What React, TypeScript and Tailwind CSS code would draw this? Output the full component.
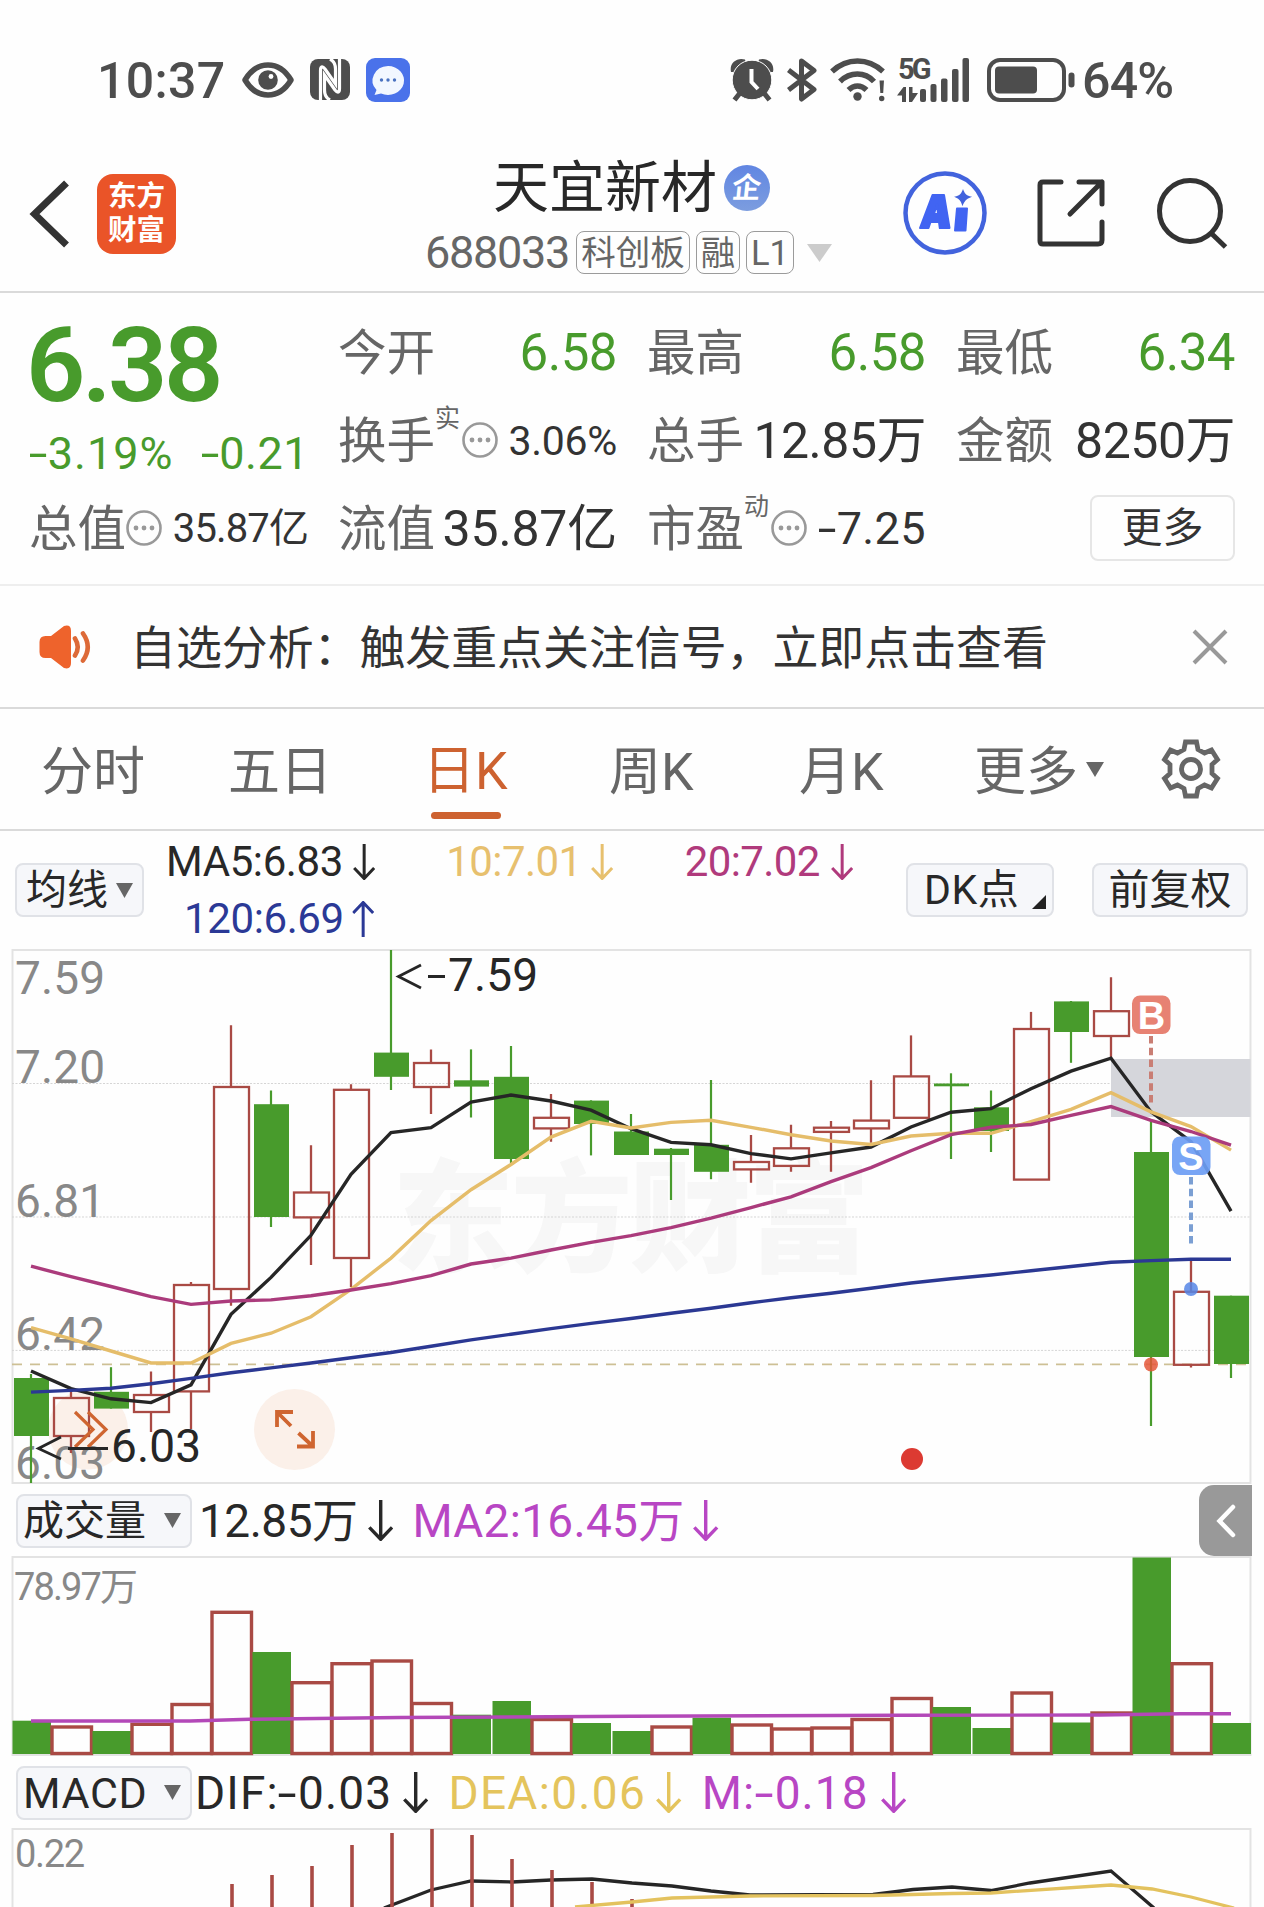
import React from "react";

const GREEN = "#489b2c";
const RED = "#a94a44";

/* Text with wide minus signs, as in the app's number face. */
function Num({ children, className = "" }: { children: string; className?: string }) {
  return (
    <span className={`inline-block shrink-0 whitespace-nowrap ${className}`}>
      {children.split("").map((c, i) =>
        c === "-" ? (
          <span key={i} className="mx-[0.06em] inline-block scale-x-150">
            -
          </span>
        ) : (
          <React.Fragment key={i}>{c}</React.Fragment>
        ),
      )}
    </span>
  );
}

function Arrow({ up = false, h = 36, className = "" }: { up?: boolean; h?: number; className?: string }) {
  const w = h * 0.62;
  return (
    <svg width={w} height={h} viewBox="0 0 22 36" fill="none" stroke="currentColor" strokeWidth="3" className={`shrink-0 ${up ? "rotate-180" : ""} ${className}`}>
      <path d="M11 0V34M1 24L11 34.5L21 24" />
    </svg>
  );
}

function Dots() {
  return (
    <svg width="36" height="36" viewBox="0 0 36 36" className="shrink-0">
      <circle cx="18" cy="18" r="16.5" fill="none" stroke="#999" strokeWidth="2.6" />
      <circle cx="10" cy="18" r="2.4" fill="#999" />
      <circle cx="18" cy="18" r="2.4" fill="#999" />
      <circle cx="26" cy="18" r="2.4" fill="#999" />
    </svg>
  );
}

function Tri({ w = 17, h = 15, color = "#666" }: { w?: number; h?: number; color?: string }) {
  return (
    <svg width={w} height={h} viewBox="0 0 18 16" preserveAspectRatio="none" className="shrink-0">
      <path d="M0 0H18L9 16Z" fill={color} />
    </svg>
  );
}

function StatusBar() {
  return (
    <div className="flex h-[160px] items-center text-[#4d4d4d]">
      <Num className="mt-[3px] ml-[97px] w-[129px] text-[50px] font-medium tracking-[0.3px]">10:37</Num>
      <svg width="52" height="36" viewBox="0 0 52 36" className="ml-[16px] shrink-0">
        <path d="M3 18C9 8 17 3 26 3S43 8 49 18C43 28 35 33 26 33S9 28 3 18Z" fill="none" stroke="#4d4d4d" strokeWidth="5.5" strokeLinejoin="round" />
        <circle cx="26" cy="18" r="9.8" fill="#4d4d4d" />
        <circle cx="29" cy="14.5" r="2.4" fill="#fff" />
      </svg>
      <svg width="40" height="41" viewBox="0 0 40 41" className="ml-[16px] shrink-0">
        <rect x="0" y="0" width="40" height="41" rx="8" fill="#4d4d4d" />
        <path d="M10.5 41V11.500C10.500 6.500 13 7.500 15 10L25.500 25V10C25.500 5 23 1.500 20 0" fill="none" stroke="#fff" strokeWidth="3.2" />
        <path d="M29.500 0V29.500C29.500 34.500 27 33.500 25 31L14.500 16V31C14.500 36 17 39.500 20 41" fill="none" stroke="#fff" strokeWidth="3.2" />
      </svg>
      <svg width="44" height="44" viewBox="0 0 44 44" className="ml-[16px] shrink-0">
        <rect width="44" height="44" rx="9" fill="#4a72ea" />
        <path d="M22 8A16 14.500 0 1 1 15 35.500L8.500 37L10.500 32A16 14.500 0 0 1 22 8Z" fill="#f2f7ff" />
        <circle cx="15.500" cy="22" r="1.700" fill="#4a72c0" />
        <circle cx="22" cy="22" r="1.700" fill="#4a72c0" />
        <circle cx="28.500" cy="22" r="1.700" fill="#4a72c0" />
      </svg>
      <div className="ml-auto flex items-center pr-[86px]">
        <svg width="44" height="44" viewBox="0 0 44 44" className="shrink-0">
          <path d="M1 14C-1 5 7 -1 15 1.500L16 5L4 14ZM43 14C45 5 37 -1 29 1.500L28 5L40 14Z" fill="#4d4d4d" />
          <circle cx="22" cy="22" r="19.800" fill="#4d4d4d" stroke="#fff" strokeWidth="1" />
          <path d="M10 35L4.500 42M34 35L39.500 42" stroke="#4d4d4d" strokeWidth="5" fill="none" />
          <path d="M21.500 11V24L28 31" stroke="#fff" strokeWidth="4" fill="none" />
        </svg>
        <svg width="31" height="44" viewBox="0 0 31 44" fill="none" stroke="#4d4d4d" strokeWidth="5" strokeLinejoin="round" strokeLinecap="butt" className="ml-[13px] shrink-0">
          <path d="M1.500 12L27 31.500L14.500 41V3L27 12.500L1.500 32" />
        </svg>
        <svg width="56" height="44" viewBox="0 0 56 44" fill="none" stroke="#4d4d4d" strokeWidth="5.500" className="ml-[12px] shrink-0">
          <path d="M2 13.500C17 -0.500 38 -0.500 53 13.500M10 23.500C20 13.500 35 13.500 44 23.500M18.500 32C24 26.500 31 26.500 36.500 32" />
          <circle cx="27.500" cy="38.500" r="4.200" fill="#4d4d4d" stroke="none" />
          <path d="M49.500 22.500H54L53.200 35H50.300Z" fill="#4d4d4d" stroke="none" />
          <circle cx="51.700" cy="40.500" r="2.700" fill="#4d4d4d" stroke="none" />
        </svg>
        <div className="ml-[11px] flex h-[44px] w-[72px] shrink-0 items-end">
          <div className="h-full w-[23px] shrink-0">
            <div className="h-[29px] pl-[1px] text-[29px] leading-[22px] font-bold tracking-[-3px]">5G</div>
            <svg width="22" height="15" viewBox="0 0 22 15" fill="#4d4d4d">
              <path d="M6.500 0H9V15H5V8.500H0ZM12 0H15.500V6H21L15 15H12Z" />
            </svg>
          </div>
          <svg width="50" height="44" viewBox="0 0 50 44" fill="#4d4d4d" className="shrink-0">
            <rect x="0" y="31" width="6" height="13" rx="2" />
            <rect x="10.500" y="26" width="6" height="18" rx="2" />
            <rect x="21" y="20.500" width="6.500" height="23.500" rx="2" />
            <rect x="32" y="11" width="6.500" height="33" rx="2" />
            <rect x="42.500" y="0" width="6.500" height="44" rx="2" />
          </svg>
        </div>
        <svg width="88" height="44" viewBox="0 0 88 44" className="ml-[18px] shrink-0">
          <rect x="2" y="2" width="75" height="40" rx="11" fill="none" stroke="#4d4d4d" strokeWidth="4" />
          <rect x="8" y="8.500" width="42" height="27" rx="4" fill="#4d4d4d" />
          <rect x="81.500" y="14.500" width="6" height="15" rx="3" fill="#4d4d4d" />
        </svg>
        <Num className="mt-[3px] ml-[7px] w-[96px] text-[50px] font-medium tracking-[-0.800px]">64%</Num>
      </div>
    </div>
  );
}

function Tag({ children, className }: { children: string; className: string }) {
  return (
    <span className={`flex h-[43px] shrink-0 items-center justify-center rounded-[8px] border-[1.500px] border-[#9b9b9b] text-[34.500px] leading-[40px] whitespace-nowrap text-[#666] ${className}`}>
      {children}
    </span>
  );
}

function Header() {
  return (
    <div className="flex h-[133px] items-start border-b-2 border-[#dadada]">
      <svg width="44" height="72" viewBox="0 0 44 72" className="mt-[18px] ml-[28px] shrink-0" fill="none" stroke="#333" strokeWidth="7">
        <path d="M38.500 5L6.500 36L38.500 67" />
      </svg>
      <div className="mt-[14px] ml-[25px] flex h-[80px] w-[79px] shrink-0 flex-col items-center justify-center rounded-[16px] bg-[#ea5428] text-[28.500px] leading-[34px] font-bold text-white">
        <span>东方</span>
        <span>财富</span>
      </div>
      <div className="ml-[249px] w-[420px] shrink-0">
        <div className="flex h-[56px] items-center pl-[68px]">
          <span className="w-[226px] shrink-0 text-[56px] leading-[56px] whitespace-nowrap text-[#282828]">天宜新材</span>
          <span className="ml-[5px] flex h-[46px] w-[46px] items-center justify-center rounded-full bg-linear-to-b from-[#6186e2] to-[#7c9ddf] text-[29px] leading-[46px] font-bold text-white">
            <span className="-skew-x-6">企</span>
          </span>
        </div>
        <div className="mt-[14px] flex h-[46px] items-center">
          <Num className="w-[151px] text-[45px] leading-[46px] tracking-[-1.300px] text-[#666]">688033</Num>
          <Tag className="w-[114px]">科创板</Tag>
          <Tag className="ml-[6px] w-[44px]">融</Tag>
          <Tag className="ml-[6px] w-[48px]">L1</Tag>
          <span className="ml-[13px]">
            <Tri w={25} h={18} color="#ccc" />
          </span>
        </div>
      </div>
      <svg width="84" height="86" viewBox="0 0 84 86" className="mt-[10px] ml-[58px] shrink-0">
        <circle cx="42" cy="43" r="39.500" fill="none" stroke="#4263dd" strokeWidth="4.500" />
        <path d="M17 58L29.500 25H41L46.500 58H36.800L36 52H27.500L25.500 58ZM31 44H35L34 34Z" fill="#4164f2" stroke="#4164f2" strokeWidth="2" strokeLinejoin="round" />
        <path d="M54 38.500H64L62.500 60.500H52Z" fill="#4164f2" stroke="#4164f2" strokeWidth="2" strokeLinejoin="round" />
        <path d="M60 21Q62 26 66.500 27Q61.500 29 59.500 34Q58 29 53.500 27Q58 26 60 21Z" fill="#4263dd" stroke="#4263dd" strokeWidth="1.500" />
      </svg>
      <svg width="70" height="70" viewBox="0 0 70 70" className="mt-[18px] ml-[49px] shrink-0" fill="none" stroke="#333" strokeWidth="5" strokeLinecap="round" strokeLinejoin="round">
        <path d="M25 4H7Q4 4 4 7V63Q4 66 7 66H62Q66 66 66 62V44M43 4H66V26M66 4L34 36" />
      </svg>
      <svg width="74" height="74" viewBox="0 0 74 74" className="mt-[16px] ml-[49px] shrink-0" fill="none" stroke="#333" strokeWidth="5">
        <circle cx="35" cy="35" r="30.500" />
        <path d="M56.500 57.500L70.500 71" />
      </svg>
    </div>
  );
}

function Cell({ label, sup, dots, value, valueClass }: { label: string; sup?: string; dots?: boolean; value: string; valueClass: string }) {
  return (
    <div className="flex h-[88px] items-center">
      <span className="mt-[5px] w-[97px] shrink-0 text-[48.500px] leading-[60px] whitespace-nowrap text-[#666]">{label}</span>
      {sup && <span className="h-[68px] w-[27px] shrink-0 text-[25px] leading-[26px] text-[#666]">{sup}</span>}
      {dots && <Dots />}
      <Num className={`mt-[3px] ml-auto leading-[60px] ${valueClass}`}>{value}</Num>
    </div>
  );
}

function Quote() {
  return (
    <div className="flex h-[294px] gap-[30px] border-b-2 border-[#eee] pt-[15px] pl-[29px]">
      <div className="w-[279px] shrink-0 text-[#489b2c]">
        <div className="flex h-[114px] items-center">
          <Num className="-ml-[3px] pt-[3px] text-[104px] leading-[110px] font-semibold tracking-[-3.500px]">6.38</Num>
        </div>
        <div className="flex h-[62px] items-center pt-[3px] text-[45px]">
          <Num className="w-[172px] tracking-[1px]">-3.19%</Num>
          <Num className="tracking-[0.500px]">-0.21</Num>
        </div>
        <Cell label="总值" dots value="35.87亿" valueClass="text-[40px] text-[#333] tracking-[-0.900px]" />
      </div>
      <div className="w-[279px] shrink-0">
        <Cell label="今开" value="6.58" valueClass="text-[51px] text-[#489b2c] tracking-[-0.500px]" />
        <Cell label="换手" sup="实" dots value="3.06%" valueClass="text-[41px] text-[#333] tracking-[-0.300px]" />
        <Cell label="流值" value="35.87亿" valueClass="text-[50px] text-[#333] tracking-[-0.200px]" />
      </div>
      <div className="w-[279px] shrink-0">
        <Cell label="最高" value="6.58" valueClass="text-[51px] text-[#489b2c] tracking-[-0.500px]" />
        <Cell label="总手" value="12.85万" valueClass="text-[50px] text-[#333] tracking-[-0.500px]" />
        <Cell label="市盈" sup="动" dots value="-7.25" valueClass="text-[45px] text-[#333] tracking-[0.400px]" />
      </div>
      <div className="w-[279px] shrink-0">
        <Cell label="最低" value="6.34" valueClass="text-[51px] text-[#489b2c] tracking-[-0.500px]" />
        <Cell label="金额" value="8250万" valueClass="text-[50px] text-[#333] tracking-[-0.500px]" />
        <div className="flex h-[88px] items-center justify-end">
          <button className="h-[66px] w-[145px] rounded-[8px] border-2 border-[#e6e6e6] pt-px text-[41px] leading-[60px] text-[#333]">更多</button>
        </div>
      </div>
    </div>
  );
}

function Banner() {
  return (
    <div className="flex h-[123px] items-center border-b-2 border-[#dadada] text-[#333]">
      <svg width="54" height="44" viewBox="0 0 54 44" className="ml-[39px] shrink-0">
        <path d="M0.500 17Q0.500 11 6.500 11H12L25 1Q32 -1 32 6V38Q32 45 25 43L12 33H6.500Q0.500 33 0.500 27Z" fill="#ee632c" />
        <path d="M36 13.500Q41.500 22 36 30.500M44 8.500Q53.500 22 44 35.500" fill="none" stroke="#dd6a38" strokeWidth="4.600" strokeLinecap="round" />
      </svg>
      <span className="mt-[2px] ml-[37px] w-[920px] shrink-0 text-[45.900px] leading-[60px] whitespace-nowrap">自选分析：触发重点关注信号，立即点击查看</span>
      <svg width="36" height="36" viewBox="0 0 36 36" className="ml-[142px] shrink-0" stroke="#999" strokeWidth="4">
        <path d="M2 2L34 34M34 2L2 34" />
      </svg>
    </div>
  );
}

function Tabs() {
  return (
    <div className="flex h-[122px] items-center border-b-2 border-[#dadada] text-[52px] leading-[60px] whitespace-nowrap text-[#666]">
      <span className="mt-[7px] ml-[41px] w-[187px] shrink-0">分时</span>
      <span className="mt-[7px] w-[195px] shrink-0">五日</span>
      <span className="flex h-full w-[186px] shrink-0 flex-col text-[#cd6230]">
        <span className="mt-[33px]">日K</span>
        <span className="mt-[10px] ml-[8px] h-[7px] w-[70px] rounded-full bg-[#cd6230]" />
      </span>
      <span className="mt-[7px] w-[190px] shrink-0">周K</span>
      <span className="mt-[7px] w-[175px] shrink-0">月K</span>
      <span className="mt-[7px] w-[112px] shrink-0">更多</span>
      <Tri w={18} h={15} />
      <svg width="62" height="62" viewBox="0 0 62 62" className="ml-[56px] shrink-0" fill="none" stroke="#666" strokeWidth="4.800">
        <path d="M25.500 4H36.500L38 11.500L44.500 15L51.500 12L57.500 21.500L52 26.500V35.500L57.500 40.500L51.500 50L44.500 47L38 50.500L36.500 58H25.500L24 50.500L17.500 47L10.500 50L4.500 40.500L10 35.500V26.500L4.500 21.500L10.500 12L17.500 15L24 11.500Z" strokeLinejoin="miter" />
        <circle cx="31" cy="31" r="9.500" />
      </svg>
    </div>
  );
}

const chip = "flex h-[54px] shrink-0 items-center rounded-[8px] border-2 border-[#e0e2e7] bg-[#f6f7fa] text-[41px] leading-[50px] whitespace-nowrap text-[#282828]";

function MaBar() {
  return (
    <div className="flex h-[118px] items-center text-[42px] leading-[50px]">
      <div className={`ml-[15px] w-[129px] pl-[9px] ${chip}`}>
        <span className="w-[90px]">均线</span>
        <Tri />
      </div>
      <div className="ml-[22px] h-full w-[740px] shrink-0">
        <div className="flex h-[57px] items-center pt-[4px]">
          <Num className="w-[187px] tracking-[-0.400px] text-[#282828]">MA5:6.83</Num>
          <Arrow className="text-[#282828]" />
          <Num className="ml-[71px] w-[145px] tracking-[-0.600px] text-[#e7c06e]">10:7.01</Num>
          <Arrow className="text-[#e7c06e]" />
          <Num className="ml-[71px] w-[146px] tracking-[-0.600px] text-[#b03a7c]">20:7.02</Num>
          <Arrow className="text-[#b03a7c]" />
        </div>
        <div className="flex h-[57px] items-center pt-[4px] pl-[18px] text-[#2b3996]">
          <Num className="w-[168px] tracking-[-0.400px]">120:6.69</Num>
          <Arrow up />
        </div>
      </div>
      <div className={`w-[148px] items-center pl-[16px] ${chip}`}>
        <span className="w-[108px] shrink-0 tracking-[0.500px]">DK点</span>
        <svg width="14" height="14" viewBox="0 0 14 14" className="mb-[6px] shrink-0 self-end">
          <path d="M14 0V14H0Z" fill="#222" />
        </svg>
      </div>
      <div className={`ml-[38px] w-[156px] justify-center ${chip}`}>前复权</div>
    </div>
  );
}

/* [rising, body top, body bottom, wick top, wick bottom] */
const candles: [number, number, number, number, number][] = [
  [0, 1378, 1436, 1374, 1483], [1, 1398, 1436, 1389, 1453], [0, 1391.8, 1408.6, 1367.2, 1408.6], [1, 1395, 1412, 1371.4, 1432],
  [1, 1285, 1391.4, 1282, 1429.3], [1, 1087, 1289, 1025.2, 1305.8], [0, 1104.2, 1217, 1090.5, 1227], [1, 1192.5, 1217.4, 1145.2, 1265],
  [1, 1089.8, 1258, 1084.2, 1287], [0, 1052.6, 1076.8, 950, 1090], [1, 1063, 1087, 1049.4, 1114], [0, 1080.3, 1086.6, 1049.4, 1117.5],
  [0, 1076.8, 1159, 1046, 1163.8], [1, 1117.8, 1128.4, 1094, 1141.7], [0, 1100.6, 1124, 1100.3, 1155.4], [0, 1131.5, 1155, 1114, 1155],
  [0, 1148.7, 1155, 1148, 1200], [0, 1144.8, 1171.8, 1080, 1179.2], [1, 1162, 1169.4, 1135, 1182.7], [1, 1148.3, 1165.9, 1124.8, 1171.8],
  [1, 1127.7, 1131.9, 1121, 1171.8], [1, 1120.6, 1128.4, 1080.3, 1142.7], [1, 1076.4, 1117.8, 1035.4, 1117.8], [0, 1083.5, 1086.3, 1073.3, 1159],
  [0, 1107.3, 1131, 1090.5, 1152], [1, 1029, 1179.6, 1011.9, 1179.6], [0, 1001.4, 1032, 1001, 1062.8], [1, 1011.2, 1036, 977.2, 1057.5],
  [0, 1152, 1357, 1120.6, 1426], [1, 1291.8, 1364.8, 1260, 1367.6], [0, 1295.7, 1364, 1295.7, 1378],
];

const ma5 = [1371, 1388.6, 1398.8, 1402.6, 1384.8, 1314.3, 1277.4, 1235.3, 1174.3, 1132.6, 1127.7, 1102, 1095, 1101, 1110.1, 1128.7, 1142.4, 1144.8, 1153.6, 1158.9, 1152.9, 1147, 1127, 1112.2, 1108.7, 1088.7, 1071.2, 1058.2, 1111.9, 1141.7, 1211.1];
const ma10 = [1327.6, 1338.8, 1351, 1363, 1363, 1343.4, 1333.2, 1316.7, 1289.3, 1258.1, 1220.6, 1189.7, 1164.5, 1137.1, 1121.3, 1128, 1122.4, 1120.3, 1127.3, 1134.7, 1141, 1144.5, 1136, 1133.3, 1133.3, 1121.7, 1109.4, 1092.6, 1111.9, 1126.6, 1150.1];
const ma20 = [1266.2, 1276.7, 1286.5, 1296.7, 1304.4, 1301, 1299.9, 1295.7, 1290, 1283.7, 1275.7, 1264, 1258.1, 1250, 1242.3, 1235.7, 1227.6, 1218.1, 1207.6, 1196.8, 1181.7, 1167.6, 1150.8, 1134.7, 1127.3, 1124.5, 1115.4, 1106.6, 1120.3, 1131.5, 1145.2];
const ma120 = [1392.1, 1390.4, 1388.3, 1383.7, 1378.4, 1372.8, 1367.9, 1363, 1357.7, 1352.5, 1346.2, 1339.9, 1334.2, 1328.6, 1323.4, 1318.5, 1313.2, 1308.3, 1302.7, 1297.8, 1293.2, 1288.3, 1283, 1278.8, 1275, 1270.8, 1266.5, 1262.3, 1260.6, 1259.2, 1259.2];

const cx = (i: number) => 31 + 40 * i;
const line = (ys: number[]) => ys.map((y, i) => `${cx(i)},${y}`).join(" ");

function CandleChart() {
  const axis: [string, number][] = [["7.59", 993.5], ["7.20", 1083], ["6.81", 1216.5], ["6.42", 1350], ["6.03", 1479]];
  return (
    <svg width="1264" height="536" viewBox="0 949 1264 536" className="block shrink-0 overflow-visible">
      <rect x="12.500" y="950" width="1238" height="533" fill="none" stroke="#e3e3e3" strokeWidth="2" />
      <text x="392" y="1262" fontSize="122" fontWeight="900" fill="#f7f7f7" textLength="478">东方财富</text>
      {[1083.5, 1217, 1350.4].map((y) => (
        <line key={y} x1="12" x2="1251" y1={y} y2={y} stroke="#d5d5d5" strokeDasharray="2 1.500" />
      ))}
      <rect x="1111" y="1059" width="139.500" height="58" fill="#d5d6db" />
      <line x1="12" x2="1251" y1="1364.400" y2="1364.400" stroke="#cdc095" strokeWidth="1.600" strokeDasharray="10 8" />
      <circle cx="88" cy="1429.500" r="40" fill="#fbf0e9" />
      <circle cx="294.500" cy="1429.500" r="40.500" fill="#fbf0e9" />
      {axis.map(([t, y]) => (
        <text key={t} x="15" y={y} fontSize="46" fill="#888" textLength="90">{t}</text>
      ))}
      {candles.map(([up, t, b, wt, wb], i) =>
        up ? (
          <g key={i} stroke={RED} strokeWidth="2.300" fill="none">
            <path d={`M${cx(i)} ${wt}V${t}M${cx(i)} ${b}V${wb}`} />
            <rect x={cx(i) - 17} y={t} width="35" height={b - t} />
          </g>
        ) : (
          <g key={i} fill={GREEN}>
            <rect x={cx(i) - 1.1} y={wt} width="2.200" height={wb - wt} />
            <rect x={cx(i) - 17} y={t} width="35" height={b - t} />
          </g>
        ),
      )}
      <g fill="none" strokeWidth="3.400">
        <polyline points={line(ma5)} stroke="#262626" />
        <polyline points={line(ma10)} stroke="#e5bd6a" />
        <polyline points={line(ma20)} stroke="#ab3b7c" />
        <polyline points={line(ma120)} stroke="#2b3893" />
      </g>
      <g fill="none" stroke="#cf6530" strokeWidth="3.200">
        <path d="M75 1412L93 1429.500L75 1447M88 1412L106 1429.500L88 1447" />
        <path d="M277 1427V1412H293M277.500 1412.500L291 1426M313 1431V1446.500H297M312.500 1446L298.500 1433" strokeWidth="3.800" />
      </g>
      <g fontSize="46" fill="#262626">
        <g fill="none" stroke="#262626" strokeWidth="2.800">
          <path d="M421 965L398.500 976.500L421 988M428 976.500H445M61 1437L38.500 1448.500L61 1459M68 1448.500H108" />
        </g>
        <text x="448" y="991" textLength="90">7.59</text>
        <text x="111" y="1462" textLength="90">6.03</text>
      </g>
      <line x1="1151" x2="1151" y1="1036" y2="1104" stroke="#c97e74" strokeWidth="4" strokeDasharray="7.500 4.300" />
      <line x1="1191" x2="1191" y1="1177" y2="1245" stroke="#7b9fd3" strokeWidth="4" strokeDasharray="7.500 4.300" />
      <rect x="1132" y="995.500" width="38.500" height="38.500" rx="8" fill="#e78273" />
      <rect x="1172" y="1136.500" width="38.500" height="38.500" rx="8" fill="#6d9df4" fillOpacity="0.920" />
      <g fontFamily="Liberation Sans" fontSize="38" fontWeight="700" fill="#fff" textAnchor="middle">
        <text x="1151.500" y="1028.500">B</text>
        <text x="1191" y="1169.500">S</text>
      </g>
      <circle cx="1191" cy="1289" r="7" fill="#5686e6" fillOpacity="0.850" />
      <circle cx="1151" cy="1364.500" r="7" fill="#e4573a" fillOpacity="0.850" />
      <circle cx="912" cy="1459" r="11" fill="#dc3a32" />
    </svg>
  );
}

const volumes = [1720.7, 1727, 1731, 1724.3, 1704.5, 1612.3, 1652, 1682.7, 1663.7, 1661, 1703.5, 1714.7, 1701, 1719.5, 1723, 1731, 1727, 1717.7, 1725, 1729, 1728, 1719.5, 1698.5, 1707, 1728, 1693, 1722.5, 1713, 1557.5, 1663.7, 1723];

/* Sessions whose volume bar is hollow although the candle is filled. */
const hollowVolume = [9, 16];

function VolumeHeader() {
  return (
    <div className="flex h-[71px] items-center text-[46px] leading-[50px]">
      <div className={`ml-[16px] w-[176px] pl-[5px] ${chip}`}>
        <span className="w-[141px]">成交量</span>
        <Tri />
      </div>
      <Num className="ml-[7px] w-[169px] tracking-[-0.500px] text-[#282828]">12.85万</Num>
      <Arrow h={41} className="text-[#282828]" />
      <Num className="ml-[19px] w-[281px] tracking-[0.300px] text-[#b846c4]">MA2:16.45万</Num>
      <Arrow h={41} className="text-[#b846c4]" />
      <div className="mr-[12px] ml-auto flex h-[71px] w-[53px] items-center justify-center rounded-l-[15px] bg-[#999]">
        <svg width="20" height="34" viewBox="0 0 20 34" fill="none" stroke="#fff" strokeWidth="4.500" strokeLinecap="round">
          <path d="M17 3L3.500 17L17 31" />
        </svg>
      </div>
    </div>
  );
}

function VolumeChart() {
  return (
    <svg width="1264" height="200" viewBox="0 1556 1264 200" className="block shrink-0">
      <rect x="12.500" y="1557" width="1238" height="198" fill="none" stroke="#e3e3e3" strokeWidth="2" />
      <text x="14" y="1600" fontSize="38" fill="#888" textLength="124">78.97万</text>
      {volumes.map((t, i) =>
        candles[i][0] || hollowVolume.includes(i) ? (
          <rect key={i} x={12 + 40 * i} y={t} width="39.500" height={1753.5 - t} fill="none" stroke={RED} strokeWidth="3.400" />
        ) : (
          <rect key={i} x={12.5 + 40 * i} y={t} width="38.500" height={1754 - t} fill={GREEN} />
        ),
      )}
      <polyline points="31,1721 190,1721 250,1719.300 400,1717.500 632,1716.300 900,1715.300 1100,1715 1180,1713.700 1231,1713.700" fill="none" stroke="#b348b8" strokeWidth="3.400" />
    </svg>
  );
}

function MacdHeader() {
  return (
    <div className="flex h-[72px] items-center pt-[1px] text-[46px] leading-[50px]">
      <div className={`ml-[16px] w-[176px] pl-[5px] ${chip}`}>
        <Num className="w-[141px] text-[43px] tracking-[0.600px]">MACD</Num>
        <Tri />
      </div>
      <Num className="ml-[3px] w-[208px] tracking-[1.100px] text-[#282828]">DIF:-0.03</Num>
      <Arrow h={41} className="text-[#282828]" />
      <Num className="ml-[20px] w-[208px] tracking-[1.300px] text-[#e4c45c]">DEA:0.06</Num>
      <Arrow h={41} className="text-[#e4c45c]" />
      <Num className="ml-[20px] w-[179px] tracking-[1.100px] text-[#b846c4]">M:-0.18</Num>
      <Arrow h={41} className="text-[#b846c4]" />
    </div>
  );
}

function MacdChart() {
  const sticks = [1884, 1875, 1866, 1845, 1833, 1829, 1835, 1859, 1870, 1882, 1899];
  return (
    <svg width="1264" height="79" viewBox="0 1828 1264 79" className="block shrink-0">
      <rect x="12.500" y="1829" width="1238" height="120" fill="none" stroke="#e3e3e3" strokeWidth="2" />
      <text x="15" y="1867" fontSize="38" fill="#888" textLength="70">0.22</text>
      <g fill="none" strokeWidth="3.300">
        <polyline points="384,1908 431,1890 471,1881 512,1882 551,1880 592,1879 632,1883 672,1886 711,1891 750,1895 873,1894.500 913,1889.500 952,1887 991,1890.500 1030,1883 1111,1871 1154,1908" stroke="#262626" />
        {sticks.map((y, k) => (
          <line key={k} x1={232 + 40 * k} x2={232 + 40 * k} y1={y} y2="1907" stroke={RED} strokeWidth="3.600" />
        ))}
        <polyline points="575,1907 632,1902 672,1898 750,1896 873,1895.500 952,1893.500 991,1893 1111,1885 1152,1889 1191,1897 1234,1908" stroke="#e3c25e" />
      </g>
    </svg>
  );
}

export default function App() {
  return (
    <div lang="zh-CN" className="flex h-[1907px] w-[1264px] flex-col overflow-hidden bg-[#fefefe] font-['Roboto','Noto_Sans_CJK_SC',sans-serif]">
      <StatusBar />
      <Header />
      <Quote />
      <Banner />
      <Tabs />
      <MaBar />
      <CandleChart />
      <VolumeHeader />
      <VolumeChart />
      <MacdHeader />
      <MacdChart />
    </div>
  );
}
